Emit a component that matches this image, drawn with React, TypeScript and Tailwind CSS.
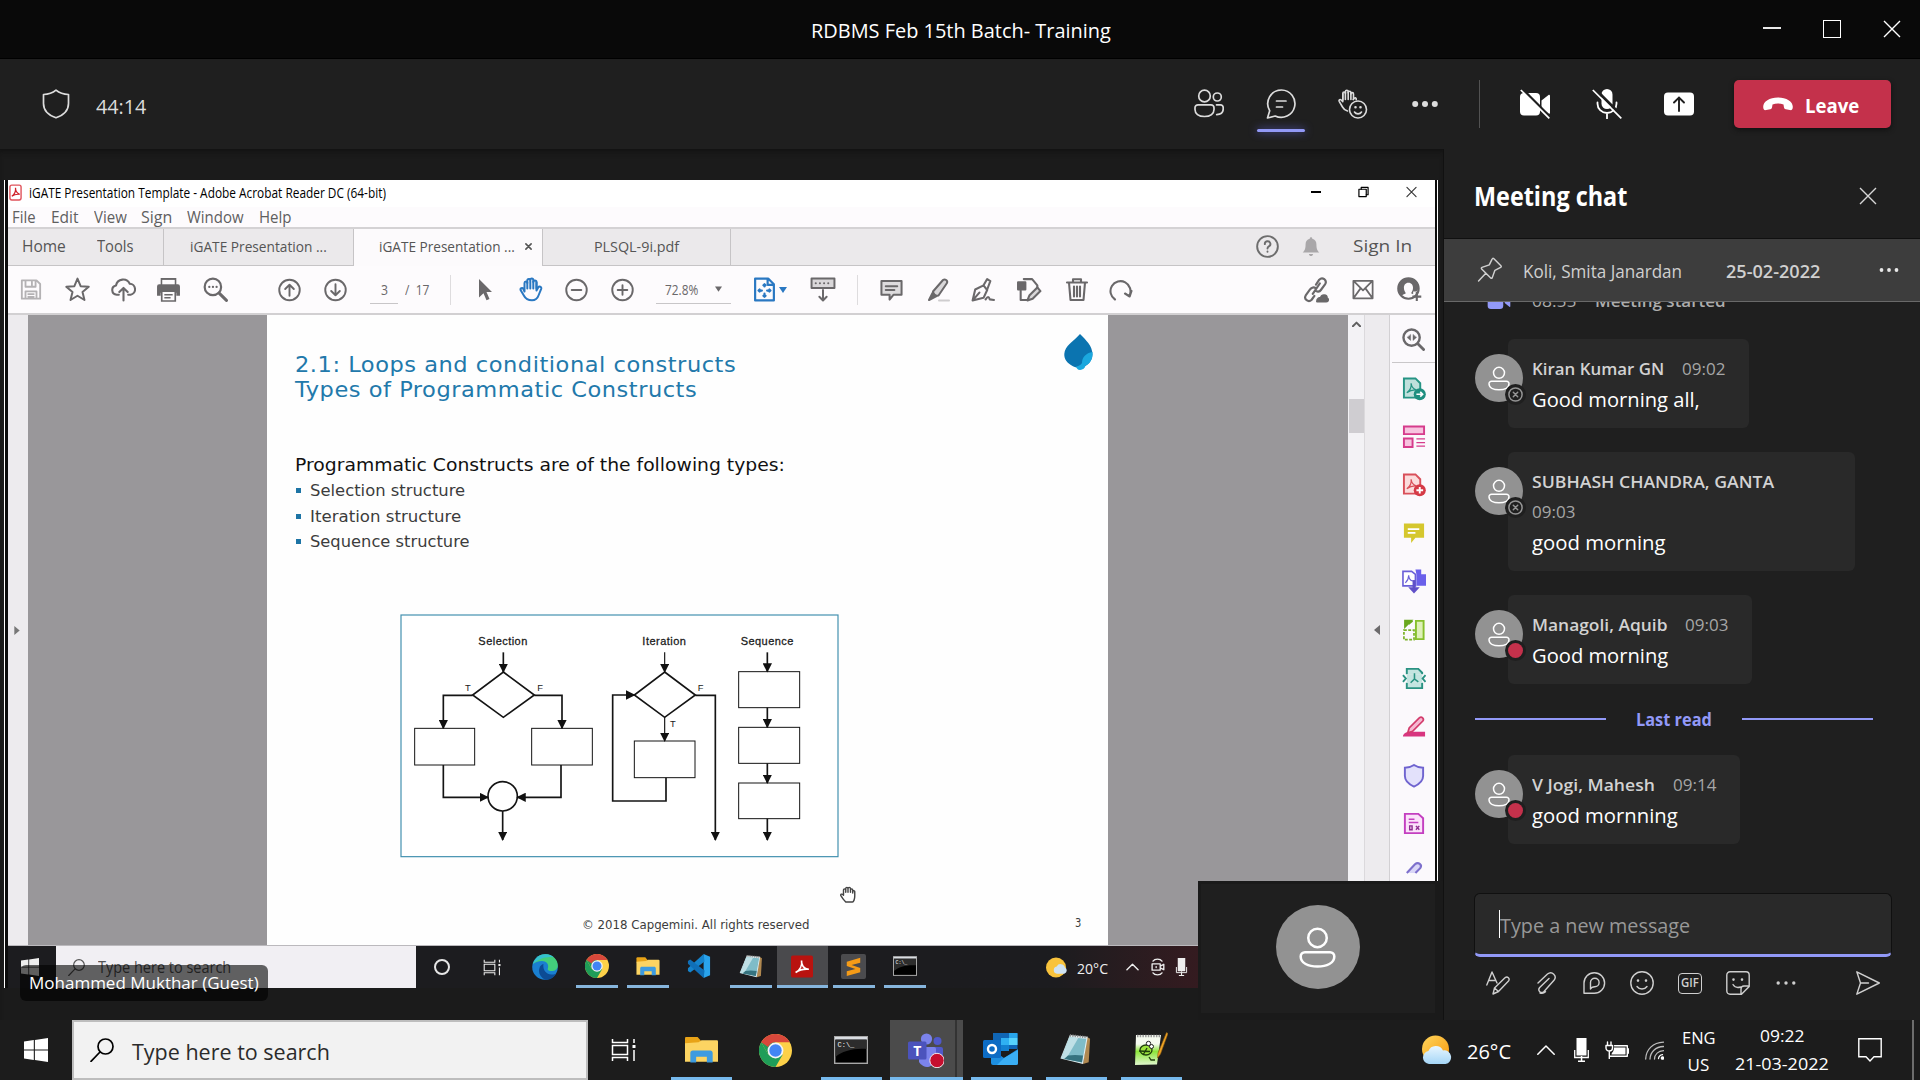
import React, { useLayoutEffect, useRef, useState } from "react";

/* Text that fills the width of its box, so that it keeps its place in tight bars. */
function Fit({ className, children }: { className: string; children: React.ReactNode }) {
  const box = useRef<HTMLSpanElement>(null);
  const inner = useRef<HTMLSpanElement>(null);
  const [scale, setScale] = useState(1);
  useLayoutEffect(() => {
    if (box.current && inner.current && inner.current.offsetWidth > 0) {
      setScale(box.current.clientWidth / inner.current.offsetWidth);
    }
  }, []);
  return (
    <span ref={box} className={`block shrink-0 ${className}`}>
      <span
        ref={inner}
        className="inline-block origin-left whitespace-nowrap"
        style={{ transform: `scaleX(${scale})` }}
      >
        {children}
      </span>
    </span>
  );
}

type SvgProps = { box?: string; className?: string; children: React.ReactNode; w?: number };
function Line({ box = "0 0 24 24", className = "", children, w = 1.5 }: SvgProps) {
  return (
    <svg
      viewBox={box}
      className={`shrink-0 ${className}`}
      fill="none"
      stroke="currentColor"
      strokeWidth={w}
      strokeLinecap="round"
      strokeLinejoin="round"
    >
      {children}
    </svg>
  );
}
function Solid({ box = "0 0 24 24", className = "", children }: SvgProps) {
  return (
    <svg viewBox={box} className={`shrink-0 ${className}`} fill="currentColor">
      {children}
    </svg>
  );
}

function CloseX({ className = "" }: { className?: string }) {
  return (
    <Line box="0 0 18 18" w={1.4} className={`h-[18px] w-[18px] ${className}`}>
      <path d="M1 1l16 16M17 1L1 17" strokeLinecap="butt" />
    </Line>
  );
}

function TitleBar() {
  return (
    <header className="grid h-[59px] grid-cols-[1fr_auto_1fr] items-center border-b border-black bg-[#090909] text-white">
      <span />
      <Fit className="ml-[2px] mt-[3px] w-[300px] text-[20px] leading-[30px]">RDBMS Feb 15th Batch- Training</Fit>
      <div className="flex items-center justify-end gap-[42px] pr-[19px]">
        <span className="mb-[2px] h-[2px] w-[18px] bg-[#e8e8e8]" />
        <span className="h-[18px] w-[18px] border-[1.5px] border-white" />
        <CloseX />
      </div>
    </header>
  );
}

function MeetingBar() {
  return (
    <div className="flex h-[90px] items-center bg-[#1f1f1f] pl-[42px] pr-[29px] text-[#dcdcdc]">
      <Line box="0 0 28 30" w={1.7} className="h-[30px] w-[28px]">
        <path d="M14 1.2c3.4 2.8 7.600 4.200 12.500 4.300v9c0 6.500-4.500 11.500-12.500 14.300C6 26 1.500 21 1.500 14.500v-9c4.900-.1 9.100-1.500 12.500-4.300z" />
      </Line>
      <Fit className="ml-[26px] mt-[4px] w-[50px] text-[20.500px] leading-[30px]">44:14</Fit>
      <div className="ml-auto flex items-center gap-[42px]">
        <Line box="0 0 30 30" w={1.7} className="h-[30px] w-[30px]">
          <circle cx="10.500" cy="7" r="5.800" />
          <circle cx="23.300" cy="8" r="4" />
          <path d="M4 15.800h13a3 3 0 0 1 3 3v1.700c0 4-3.500 7-9.500 7S1 24.500 1 20.500v-1.700a3 3 0 0 1 3-3z" />
          <path d="M22.500 15.800h4a2.700 2.700 0 0 1 2.700 2.700v1.500c0 3.400-2.500 5.400-6.500 5.600" />
        </Line>
        <div className="relative">
          <Line box="0 0 30 30" w={1.7} className="h-[30px] w-[30px]">
            <path d="M15.500 1a13.700 13.700 0 1 1-6.300 26L1.500 29l2.200-7.300A13.700 13.700 0 0 1 15.500 1z" />
            <path d="M10.500 12h9.500M10.500 18h6" />
          </Line>
          <span className="absolute -left-[9px] top-[40px] h-[3px] w-[48px] rounded-full bg-[#9299f7] shadow-[0_0_8px_#5b5fc7]" />
        </div>
        <Line box="0 0 30 30" w={1.6} className="h-[30px] w-[30px]">
          <path d="M9.500 22C7 21.500 5.600 20 4.500 18L1.200 12.300c-.6-1.500 1-2.300 2-1.300l1.600 1.600V4.500c0-2 2.600-2 2.600 0v-1.800c0-2 2.800-2 2.800 0v1c0-2 2.700-2 2.700 0V5c0-1.800 2.600-1.800 2.600 0v5.500" />
          <path d="M4.800 4.500V11M7.400 3v7.500M10.200 3v7.500M12.900 4.500v6" />
          <path d="M15.200 10.500c1-2.200 3.400-2.200 3 .3" />
          <circle cx="20" cy="20.500" r="8.500" />
          <path d="M16.500 23c1.500 2.500 5.500 2.500 7 0" />
          <path d="M17.500 18.200v.1M22.500 18.200v.1" strokeWidth="2.600" />
        </Line>
        <Solid box="0 0 30 30" className="h-[30px] w-[30px]">
          <circle cx="5.200" cy="15" r="3" />
          <circle cx="15" cy="15" r="3" />
          <circle cx="24.800" cy="15" r="3" />
        </Solid>
      </div>
      <span className="ml-[39px] h-[48px] w-px bg-[#525252]" />
      <div className="ml-[40px] flex items-center gap-[42px] text-white">
        <Solid box="0 0 30 30" className="h-[30px] w-[30px]">
          <path d="M4 4h12a4 4 0 0 1 4 4v14.500a4 4 0 0 1-4 4H4a4 4 0 0 1-4-4V8a4 4 0 0 1 4-4z" />
          <path d="M21.500 11.500L28.500 6c.8-.5 1.500-.2 1.500.8v17c0 1-.7 1.300-1.500.7l-7-5.500z" />
          <path d="M1.500-.5L30.500 28.500" stroke="#1f1f1f" strokeWidth="3" />
          <path d="M.8 1L29.300 29.300" stroke="#fff" strokeWidth="1.700" />
        </Solid>
        <Solid box="0 0 30 30" className="h-[30px] w-[30px]">
          <rect x="9.500" y="0" width="11" height="20" rx="5.500" />
          <path d="M5.500 13.500v1.200c0 5 4 9.300 9.500 9.300s9.500-4.300 9.500-9.300v-1.200M15 24v5.500" fill="none" stroke="#fff" strokeWidth="1.800" strokeLinecap="round" />
          <path d="M2.500-.5L30.500 27.500" stroke="#1f1f1f" strokeWidth="3" />
          <path d="M.8 1L29.300 29.300" stroke="#fff" strokeWidth="1.700" />
        </Solid>
        <Solid box="0 0 30 30" className="h-[30px] w-[30px]">
          <rect x="0" y="3.500" width="30" height="23" rx="4" />
          <path d="M15 22V9M10 13.500l5-5 5 5" fill="none" stroke="#1f1f1f" strokeWidth="1.900" strokeLinecap="round" />
        </Solid>
      </div>
      <button className="ml-[40px] flex h-[48px] w-[157px] items-center rounded-[5px] bg-[#c4314b] pl-[29px] font-bold text-white shadow-[0_2px_5px_#111]">
        <Solid box="0 0 30 14" className="h-[14px] w-[30px]">
          <path d="M15 .5c8.500 0 14.800 4 14.800 9.300 0 2.700-1 3.700-3 3.300l-4-.8c-1.300-.3-1.700-.9-1.900-2.200l-.4-2.600c-1.600-.7-3.500-1-5.500-1s-3.900.3-5.500 1l-.4 2.600c-.2 1.300-.6 1.900-1.900 2.200l-4 .8c-2 .4-3-.6-3-3.300C.2 4.500 6.500.5 15 .5z" />
        </Solid>
        <Fit className="ml-[12px] mt-[3px] w-[54px] text-[20px] leading-[30px]">Leave</Fit>
      </button>
    </div>
  );
}

/* ---------- shared screen: Acrobat window ---------- */

function AcrobatTitle() {
  return (
    <div className="flex h-[27px] items-center bg-white text-black">
      <svg viewBox="0 0 14 18" className="-mt-[2px] ml-px h-[17px] w-[13px] shrink-0">
        <rect x="1" y="1" width="12" height="16" rx="2" fill="#fff" stroke="#e0525a" strokeWidth="1.500" />
        <path d="M3 13c3-2 4.500-5 4-9 0 4 1.500 6 4.500 7-3.500-.5-6 .3-8.500 2z" fill="none" stroke="#d02028" strokeWidth="1.300" />
      </svg>
      <Fit className="-mt-[2px] ml-[7px] w-[357px] text-[14px] leading-[20px]">
        iGATE Presentation Template - Adobe Acrobat Reader DC (64-bit)
      </Fit>
      <div className="-mt-[3px] ml-auto mr-[18px] flex items-center gap-[37px]">
        <span className="h-[1.500px] w-[10px] bg-black" />
        <Line box="0 0 12 12" w={1.300} className="h-[12px] w-[11px]">
          <rect x="1" y="3" width="8" height="8" />
          <path d="M3.500 3V1h7.500v8H9" />
        </Line>
        <Line box="0 0 12 12" w={1.200} className="h-[12px] w-[11px] text-[#333]">
          <path d="M1 1l10 10M11 1L1 11" />
        </Line>
      </div>
    </div>
  );
}

function AcrobatMenu() {
  return (
    <div className="flex h-[20px] items-center bg-[#fdfbfd] pl-[4px] text-[15.500px] leading-[20px] text-[#606060]">
      <Fit className="w-[24px]">File</Fit>
      <Fit className="ml-[15px] w-[28px]">Edit</Fit>
      <Fit className="ml-[15px] w-[33px]">View</Fit>
      <Fit className="ml-[14px] w-[31px]">Sign</Fit>
      <Fit className="ml-[15px] w-[57px]">Window</Fit>
      <Fit className="ml-[15px] w-[33px]">Help</Fit>
    </div>
  );
}

function AcrobatTabs() {
  return (
    <div className="flex h-[39px] items-stretch border-t-2 border-[#d4d2d4] bg-[#ebe9eb] text-[15.500px] leading-[20px] text-[#555]">
      <div className="flex w-[156px] items-center border-b border-r border-[#c6c4c6] pb-[2px] pl-[14px]">
        <Fit className="w-[44px]">Home</Fit>
        <Fit className="ml-[31px] w-[37px]">Tools</Fit>
      </div>
      <div className="flex w-[190px] items-center border-b border-r border-[#c6c4c6] pl-[26px] text-[14.500px]">
        <Fit className="w-[137px]">iGATE Presentation ...</Fit>
      </div>
      <div className="flex w-[188px] items-center bg-[#fcfafc] pb-px pl-[25px] text-[14.500px]">
        <Fit className="w-[136px]">iGATE Presentation ...</Fit>
        <Line box="0 0 8 8" w={1.800} className="-mt-[2px] ml-[10px] h-[7px] w-[7px]">
          <path d="M1 1l6 6M7 1L1 7" />
        </Line>
      </div>
      <div className="flex w-[189px] items-center border-x border-b border-[#c6c4c6] pl-[51px] text-[14.500px]">
        <Fit className="w-[85px]">PLSQL-9i.pdf</Fit>
      </div>
      <div className="flex grow items-center justify-end border-b border-[#c6c4c6] pb-[2px] pr-[23px]">
        <Line className="h-[23px] w-[23px] text-[#6d6d6d]" w={2}>
          <circle cx="12" cy="12" r="10.800" />
          <path d="M9.200 9.500a2.900 2.900 0 1 1 4.300 2.400c-1 .6-1.500 1-1.500 2.200M12 17.300v.2" />
        </Line>
        <Solid className="ml-[22px] h-[21px] w-[20px] text-[#a9a7a9]">
          <path d="M12 1c1 0 1.500.7 1.500 1.700 3.300.8 5 3.300 5 6.500 0 6 1.500 8 3.500 10H2c2-2 3.500-4 3.500-10 0-3.200 1.700-5.700 5-6.500C10.500 1.700 11 1 12 1zM9.500 21h5c-.3 1.700-1.300 2.500-2.500 2.500s-2.200-.8-2.500-2.500z" />
        </Solid>
        <Fit className="ml-[32px] w-[59px] font-medium">Sign In</Fit>
      </div>
    </div>
  );
}

function AcrobatToolbar() {
  return (
    <div className="flex h-[49px] items-center border-b-2 border-[#d2d0d2] bg-[#fdfbfd] pl-[12px] text-[#6a686a]">
      <Line className="h-[23px] w-[22px] text-[#b4b2b4]" w={2}>
        <path d="M2 2h16l4 4v16H2zM6 2v7h11V2M13 3.500v4M6 22v-8h12v8M9 17h6M9 20h6" />
      </Line>
      <Line className="ml-[22px] h-[25px] w-[27px]" w={1.900}>
        <path d="M12 1.500l3 7.300 7.800.6-6 5 1.900 7.700L12 18l-6.700 4.100 1.900-7.700-6-5 7.800-.6z" />
      </Line>
      <Line className="ml-[20px] h-[25px] w-[25px]" w={2}>
        <path d="M7.500 17H5.500a4.500 4.500 0 0 1-.7-8.900A7 7 0 0 1 18 6.500a5.300 5.300 0 0 1 .8 10.500H16.500M12 22.500V11M8 14.500l4-4 4 4" />
      </Line>
      <Solid className="ml-[20px] h-[25px] w-[25px]">
        <path d="M4.500 1h15v6h-15zM1 9a2 2 0 0 1 2-2h18a2 2 0 0 1 2 2v9h-3.500v-3h-15v3H1z" />
        <path d="M6 2.800h12V7H6z" fill="#fdfbfd" />
        <path d="M5.500 13.500h13V23h-13z" stroke="#6a686a" strokeWidth="1.600" fill="#fdfbfd" />
        <path d="M8 17h8M8 20h6" stroke="#6a686a" strokeWidth="1.400" />
      </Solid>
      <Line className="ml-[22px] mr-px h-[25px] w-[25px]" w={2.100}>
        <circle cx="9.500" cy="9.500" r="7.900" />
        <path d="M15.500 15.500l7 7" strokeWidth="2.900" />
        <path d="M6 9.500h.1M9.500 9.500h.1M13 9.500h.1" />
      </Line>
      <Line className="ml-[49px] h-[24px] w-[23px]" w={2}>
        <circle cx="12" cy="12" r="10.700" />
        <path d="M12 18V6.500M7.500 11L12 6.500l4.500 4.500" />
      </Line>
      <Line className="ml-[23px] h-[24px] w-[23px]" w={2}>
        <circle cx="12" cy="12" r="10.700" />
        <path d="M12 6v11.500M7.500 13l4.500 4.500 4.500-4.500" />
      </Line>
      <div className="ml-[23px] flex h-[28px] w-[28px] items-center justify-center border-b border-[#c8c6c8] text-[14px]">
        <Fit className="w-[7px]">3</Fit>
      </div>
      <Fit className="ml-[7px] w-[24px] text-[14px]">/&nbsp; 17</Fit>
      <span className="ml-[21px] h-[30px] w-px bg-[#dedcde]" />
      <Solid box="0 0 14 22" className="ml-[27px] h-[22px] w-[14px]">
        <path d="M1 0l13 13H8.500l3 7-3 1.200-3-7L1 18.500z" />
      </Solid>
      <Line className="ml-[27px] h-[25px] w-[24px] text-[#2a78c2]" w={2}>
        <path d="M5.500 14V5.500c0-2 2.800-2 2.800 0V3.200c0-2.300 3-2.300 3 0V2.500c0-2 3-2 3 0v2c0-2 3.200-2 3.200 0V13l1.700-3c1-1.700 3.600-.8 3 1.300L19.500 18c-1 3-3 4.800-6.500 4.800-4 0-6.500-1.500-8-4.500l-3.300-5.500c-.8-2 1.500-3 2.600-1.500z" />
        <path d="M8.300 5v6M11.300 4v7M14.300 4v7M17.500 5v6" />
      </Line>
      <Line className="ml-[22px] h-[24px] w-[23px]" w={2}>
        <circle cx="12" cy="12" r="10.700" />
        <path d="M7 12h10" />
      </Line>
      <Line className="ml-[23px] h-[24px] w-[23px]" w={2}>
        <circle cx="12" cy="12" r="10.700" />
        <path d="M7 12h10M12 7v10" />
      </Line>
      <div className="ml-[22px] flex h-[28px] w-[75px] items-center border-b border-[#c8c6c8] pl-[9px]">
        <Fit className="w-[33px] text-[14px]">72.8%</Fit>
        <Solid box="0 0 8 6" className="ml-[17px] h-[6px] w-[7px]">
          <path d="M0 0h8L4 6z" />
        </Solid>
      </div>
      <Line className="ml-[23px] h-[25px] w-[21px] text-[#2a78c2]" w={2.100} box="2 0 20 24">
        <path d="M3 1.500h12.500L21 7v15.500H3zM15 2v5.500h5.500" />
        <path d="M12 7v2M12 16v3M6.500 13h3M14.500 13h3M11 8l1-1 1 1M11 18l1 1 1-1M7.300 12l-1 1 1 1M16.700 12l1 1-1 1" />
      </Line>
      <Solid box="0 0 8 6" className="ml-[4px] h-[6px] w-[8px] text-[#2a78c2]">
        <path d="M0 0h8L4 6z" />
      </Solid>
      <Line className="ml-[23px] h-[25px] w-[26px]" w={1.900}>
        <rect x="1" y="1.500" width="22" height="9" fill="#d9d7d9" />
        <path d="M5 6h.1M9 6h.1M13 6h.1M17 6h.1M12 12.500V22M8.500 19l3.500 3.500 3.500-3.500" />
      </Line>
      <span className="ml-[21px] h-[30px] w-px bg-[#dedcde]" />
      <Line className="ml-[22px] h-[24px] w-[23px]" w={2.100}>
        <path d="M1.500 2.500h21V17H14l-4 5v-5H1.500z" fill="#dddbdd" />
        <path d="M6 8h12M6 12h9" />
      </Line>
      <Line className="ml-[23px] h-[25px] w-[24px]" w={2}>
        <path d="M7 14L17 2.500c2-1.500 5 .5 4 3L12.500 18l-4 .5z" fill="#d9d7d9" />
        <path d="M6.500 15.500l4 3L3 22.500z" fill="#6a686a" />
        <path d="M13 23h10" stroke="#cfcdcf" />
      </Line>
      <Line className="ml-[20px] h-[25px] w-[25px]" w={2}>
        <path d="M2.500 22.500L5 12l8-4 3.500 4.500L13 20zM3 22l6-7M13 8l3.500-6 3 2-3 8M15 21.500c2-3 3-3 4 0l4 .5" />
      </Line>
      <Line className="ml-[21px] h-[25px] w-[26px]" w={2}>
        <path d="M7 2h8l5 6v3M4 13v9h6" />
        <path d="M1.500 5h7v7h-7z" fill="#6a686a" />
        <path d="M10.500 22.500l2-5L20 10l3 3.500-7.500 7.300z" fill="#d9d7d9" />
      </Line>
      <Line className="ml-[23px] h-[25px] w-[24px]" w={2.100}>
        <path d="M2 5h20M8 4.500V1.800h8v2.700M4 5l1.500 17.500h13L20 5M9 9v10M12 9v10M15 9v10" />
      </Line>
      <Line className="ml-[20px] h-[24px] w-[24px]" w={2.100}>
        <path d="M6 21.500A10 10 0 1 1 20.500 17.500M22.500 13l-1.800 5.500L16 15.500" />
      </Line>
      <Line className="ml-[170px] h-[26px] w-[26px]" w={2}>
        <path d="M9 15.500l6.500-9.500M12 7l3-4.500c3-3 7.500.5 5.500 4L16.500 12c-1.200 1.700-3.500 2-5 .5M12 10.500c-2-1.500-4-1-5.500 1L2.500 17c-2 3.500 2.500 7 5.500 4l2.500-3.500" />
        <path d="M13 22.500c0-2.500 2-3.500 3.500-3.300C17.500 16 22 16.500 22 19.500c1.500.7 1.500 3-.5 3z" fill="#6a686a" />
      </Line>
      <Line className="ml-[22px] h-[21px] w-[24px]" w={2}>
        <path d="M1 2h22v20H1zM1.500 2.500L12 13 22.500 2.500M1.500 21.500L9 11M22.500 21.500L15 11" />
      </Line>
      <Solid className="ml-[22px] h-[25px] w-[25px]">
        <circle cx="11" cy="11" r="9.800" fill="none" stroke="#6a686a" strokeWidth="2" />
        <path d="M11 1.500c-9 0-13 10-7 17 1-1.500 3-2 4.500-3-3-3.500-2.500-10 2.500-10s5.500 6.500 2.500 10c.7.500 1.500.7 2 1V14H19c4-6 .5-12.500-8-12.500z" />
        <path d="M19 14.500v8.500M14.800 18.800h8.500" stroke="#6a686a" strokeWidth="2" />
      </Solid>
    </div>
  );
}

function Flowchart() {
  const label = "font-['Liberation_Sans'] text-[33px] tracking-[2px]";
  return (
    <svg viewBox="63 43 1317 732" className="ml-[105px] mt-[59px] h-[244px] w-[439px]">
      <defs>
        <marker id="tip" viewBox="0 0 10 10" refX="9" refY="5" markerWidth="28" markerHeight="28" markerUnits="userSpaceOnUse" orient="auto">
          <path d="M0 0L10 5L0 10z" fill="#111" />
        </marker>
      </defs>
      <rect x="66" y="46" width="1311" height="725" fill="#fff" stroke="#3f8eae" strokeWidth="3.500" />
      <g fill="#1a1a1a" stroke="#1a1a1a" strokeWidth=".8">
        <text x="298" y="136" className={label} textLength="149">Selection</text>
        <text x="790" y="136" className={label} textLength="133">Iteration</text>
        <text x="1085" y="136" className={label} textLength="160">Sequence</text>
        <g className="font-['Liberation_Sans'] text-[28px]" strokeWidth="0">
          <text x="258" y="273">T</text>
          <text x="475" y="274">F</text>
          <text x="873" y="381">T</text>
          <text x="956" y="274">F</text>
        </g>
      </g>
      <g fill="none" stroke="#141414" strokeWidth="3">
        <rect x="107" y="386" width="180" height="110" />
        <rect x="458" y="386" width="182" height="110" />
        <rect x="766" y="424" width="182" height="110" />
        <rect x="1079" y="216" width="183" height="108" />
        <rect x="1079" y="383" width="183" height="108" />
        <rect x="1079" y="550" width="183" height="107" />
      </g>
      <g fill="none" stroke="#141414" strokeWidth="5">
        <path d="M373 217L466 286L373 353L281 286z" />
        <path d="M857 217L949 286L857 353L766 286z" />
        <circle cx="371" cy="590" r="44" />
        <path d="M373 158V217" markerEnd="url(#tip)" />
        <path d="M281 287H193V386" markerEnd="url(#tip)" />
        <path d="M466 287H549V386" markerEnd="url(#tip)" />
        <path d="M193 496V593H327" markerEnd="url(#tip)" />
        <path d="M546 496V593H415" markerEnd="url(#tip)" />
        <path d="M371 634V721" markerEnd="url(#tip)" />
        <path d="M857 158V217" markerEnd="url(#tip)" strokeWidth="3.500" />
        <path d="M857 353V424" markerEnd="url(#tip)" strokeWidth="3.500" />
        <path d="M861 534V604H701V286H766" markerEnd="url(#tip)" />
        <path d="M949 287H1009V721" markerEnd="url(#tip)" />
        <path d="M1165 158V216" markerEnd="url(#tip)" />
        <path d="M1165 324V383" markerEnd="url(#tip)" />
        <path d="M1165 491V550" markerEnd="url(#tip)" />
        <path d="M1165 657V721" markerEnd="url(#tip)" />
      </g>
    </svg>
  );
}

function Bullet({ width, text }: { width: string; text: string }) {
  return (
    <li className="flex h-[25.500px] items-center text-[16.500px] leading-[25px] text-[#3c3c3c]">
      <span className="ml-px h-[5px] w-[5px] bg-[#1d74a5]" />
      <Fit className={`ml-[9px] ${width}`}>{text}</Fit>
    </li>
  );
}

function Slide() {
  return (
    <div className="relative w-[841px] overflow-hidden bg-[#fefefe] pl-[28px] font-['DejaVu_Sans',sans-serif]">
      <div className="flex justify-between">
        <div className="mt-[37px] text-[21.500px] leading-[25px] text-[#2279ab]">
          <Fit className="w-[441px] tracking-[0.500px]">2.1: Loops and conditional constructs</Fit>
          <Fit className="w-[402px] tracking-[0.500px]">Types of Programmatic Constructs</Fit>
        </div>
        <svg viewBox="0 0 29 36" className="mr-[15px] mt-[19px] h-[36px] w-[29px]">
          <path d="M16 0c6 6 12.500 12 12.500 20.500 0 4-2 7.500-5.500 10.500-4 3-10 3.500-14.500 1C3 29 0 25 .3 20 .8 11.500 10 7 16 0z" fill="#0b74b0" />
          <path d="M28.500 18C22 19 18 23.500 18 29c-1 2-3 3-6 3.700 1 2 1.500 3 4 3.300 4-.5 5-2.500 5.500-4.500 4.500-1.500 7.500-6.500 7-13.500z" fill="#1ba8de" />
        </svg>
      </div>
      <Fit className="mt-[50px] w-[490px] text-[17.500px] leading-[26px] text-[#111]">
        Programmatic Constructs are of the following types:
      </Fit>
      <ul>
        <Bullet width="w-[155px]" text="Selection structure" />
        <Bullet width="w-[151px]" text="Iteration structure" />
        <Bullet width="w-[160px]" text="Sequence structure" />
      </ul>
      <Flowchart />
      <div className="mt-[57px] flex text-[12.500px] leading-[20px] text-[#3c3c3c]">
        <Fit className="ml-[287px] w-[227px]">© 2018 Capgemini. All rights reserved</Fit>
        <Fit className="-mt-[2px] ml-[266px] w-[6px] text-[11.500px]">3</Fit>
      </div>
      <Line className="absolute left-[572px] top-[569px] h-[21px] w-[18px] text-[#444]" w={1.900}>
        <path d="M6 13V6c0-2 3-2 3 0V4c0-2 3-2 3 0v0c0-2 3.300-2 3.300 0v2c0-2 3-2 3 0v2c0-1.500 2.700-1.500 2.700 0v6c0 4-1.500 8-3 8H9c-2-2-4.500-5-6.500-8.500-1-2 1.500-3 3.500-.5zM9 5v4M12 4v5M15.300 4v5M18.300 6v4" fill="#fff" />
      </Line>
    </div>
  );
}

function PdfPage({ color, fill }: { color: string; fill: string }) {
  return (
    <>
      <path d="M2 2h12l5 5v15H2z" fill={fill} stroke={color} strokeWidth="2" />
      <path d="M5 17c3-2 5-6 4.500-10 .5 4 2 6 5.500 7-4-.3-7 .7-10 3z" fill="none" stroke={color} strokeWidth="1.300" />
    </>
  );
}

function ToolsPanel() {
  const cell = "flex h-[48.400px] shrink-0 items-center justify-center";
  const ico = "h-[25px] w-[24px]";
  return (
    <div className="w-[45px] overflow-hidden bg-[#fbf9fc] pl-[2px]">
      <div className="mb-px flex h-[48px] items-center justify-center border-b border-[#c9c7c9] pt-px text-[#6a686a]">
        <Line className="h-[23px] w-[23px]" w={2.500}>
          <circle cx="10" cy="10" r="8.500" />
          <path d="M16.500 16.500l6 6" strokeWidth="3" />
          <path d="M9 7v6l-3.500-3zM11.500 7v6l3.500-3z" fill="currentColor" strokeWidth=".5" />
        </Line>
      </div>
      <div className={cell}>
        <svg viewBox="0 0 25 25" className={ico}>
          <PdfPage color="#269484" fill="#bfe0dc" />
          <circle cx="18.500" cy="18.500" r="6.300" fill="#1f8f80" />
          <path d="M15 18.500h6M19 16l2.500 2.500L19 21" stroke="#fff" strokeWidth="1.700" fill="none" />
        </svg>
      </div>
      <div className={cell}>
        <svg viewBox="0 0 25 25" className={ico} fill="#f7c3df" stroke="#d63c8c" strokeWidth="2">
          <path d="M2 2h21v8H2zM2 14.500h9v9H2z" />
          <path d="M15 15h9M15 18.800h9M15 22.500h9" strokeWidth="1.300" />
        </svg>
      </div>
      <div className={cell}>
        <svg viewBox="0 0 25 25" className={ico}>
          <PdfPage color="#d9505a" fill="#fbdcdc" />
          <circle cx="18.500" cy="18.500" r="6.300" fill="#d53a46" />
          <path d="M15 18.500h7M18.500 15v7" stroke="#fff" strokeWidth="2" />
        </svg>
      </div>
      <div className={cell}>
        <svg viewBox="0 0 25 25" className={ico}>
          <path d="M2 2h21v15H14l-4.500 5.500V17H2z" fill="#d5c72e" />
          <path d="M6 8h12M6 11.800h8" stroke="#fff" strokeWidth="1.700" />
        </svg>
      </div>
      <div className={cell}>
        <svg viewBox="0 0 25 25" className={ico}>
          <path d="M1 2h9l4 3v12H1z" fill="#fff" stroke="#6a60d8" strokeWidth="1.700" />
          <path d="M3.500 14c3-3 3.500-5 3.500-8 0 4 1.500 5.500 4.500 6" fill="none" stroke="#6a60d8" strokeWidth="1.200" />
          <path d="M14 0h6v5h5v12H15V5z" fill="#6a60ea" />
          <path d="M12.500 11v9" stroke="#6050c8" strokeWidth="3" />
          <path d="M6.500 18.500h12l-6 6.500z" fill="#6050c8" />
        </svg>
      </div>
      <div className={cell}>
        <svg viewBox="0 0 25 25" className={ico}>
          <path d="M14.500 2.500h8v19h-8z" fill="#def0b8" stroke="#86c02c" strokeWidth="2" />
          <path d="M2 12h10.500v10H2z" fill="none" stroke="#7cb228" strokeWidth="1.800" strokeDasharray="3 1.500" />
          <path d="M3 9V2h7zM7 6l4-3.500" fill="#6aa81e" stroke="#6aa81e" strokeWidth="1.600" />
        </svg>
      </div>
      <div className={cell}>
        <svg viewBox="0 0 25 25" className={ico} fill="none" stroke="#2a9282" strokeWidth="2">
          <path d="M5 8V2.500h12l4 4V8M5 17v5.500h16V17" fill="#c4e4e0" />
          <path d="M5 8h16v9H5z" fill="#c4e4e0" stroke="none" />
          <path d="M1 9l3 3.500L1 16M24.500 9l-3 3.500 3 3.500" />
          <path d="M9 17l4-4 4 3M13 13V7" strokeWidth="1.600" />
        </svg>
      </div>
      <div className={cell}>
        <svg viewBox="0 0 25 25" className={ico}>
          <path d="M1 23c0-3 3-4.500 6-5h17v5z" fill="#d8357f" />
          <path d="M6 19l1.500-5L18 3.500c2.500-2 5.500.8 3.700 3.300L11 17.500z" fill="#f6b9d2" stroke="#d33c6c" strokeWidth="1.800" />
        </svg>
      </div>
      <div className={cell}>
        <svg viewBox="0 0 25 25" className={ico}>
          <path d="M12.500 1.500c3 2 6 3 9.500 3V13c0 5-4 8.500-9.500 11C7 21.500 3 18 3 13V4.500c3.500 0 6.500-1 9.500-3z" fill="#e3e1fb" stroke="#6f64cf" strokeWidth="2" />
        </svg>
      </div>
      <div className={cell}>
        <svg viewBox="0 0 25 25" className={ico} fill="none" stroke="#c33fc0" strokeWidth="2">
          <path d="M3 2.500h14l5 4.500v15.500H3z" fill="#fbe2fa" />
          <path d="M7 8h6M7 11.500h10" strokeWidth="1.500" />
          <path d="M8 15h2.500v4H8zM14.500 15l3.500 4M18 15l-3.500 4" strokeWidth="1.500" stroke="#8f2d90" />
        </svg>
      </div>
      <div className="flex h-[48px] items-start justify-center pt-[11px]">
        <svg viewBox="0 0 25 25" className={ico}>
          <path d="M5 14l8.500-9c3.500-3 8 .5 5.500 4l-5 5" fill="#d9d6f7" stroke="#7d70cc" strokeWidth="2.200" />
        </svg>
      </div>
    </div>
  );
}

function Document() {
  return (
    <div className="flex h-[631px] border-b border-[#bbb9bd] bg-[#99979a]">
      <div className="flex w-[20px] items-center bg-[#edebee]">
        <Solid box="0 0 6 10" className="ml-[6px] h-[9px] w-[6px] text-[#777]">
          <path d="M0 0l6 5-6 5z" />
        </Solid>
      </div>
      <span className="w-[239px] shrink-0" />
      <Slide />
      <span className="w-[240px] shrink-0" />
      <div className="w-[17px] border-r border-[#dbd9dc] bg-[#f3f2f5] pl-px">
        <Line box="0 0 10 6" w={2.200} className="ml-[3px] mt-[6px] h-[6px] w-[9px] text-[#606060]">
          <path d="M1 5.500l4-4 4 4" />
        </Line>
        <div className="mt-[72px] h-[34px] w-[15px] bg-[#cfcdd1]" />
      </div>
      <div className="flex w-[25px] items-center justify-center border-r border-[#d2d0d3] bg-[#edebee]">
        <Solid box="0 0 6 10" className="h-[10px] w-[6px] text-[#6c6a6c]">
          <path d="M6 0L0 5l6 5z" />
        </Solid>
      </div>
      <ToolsPanel />
    </div>
  );
}

/* ---------- application icons shared by both taskbars ---------- */

function WinLogo({ className = "" }: { className?: string }) {
  return (
    <Solid className={className}>
      <path d="M0 3.400L9.800 2v9.500H0zM10.900 1.900L24 0v11.500H10.900zM0 12.500h9.800V22L0 20.600zM10.900 12.500H24V24l-13.100-1.900z" />
    </Solid>
  );
}
function TaskView({ className = "" }: { className?: string }) {
  return (
    <Line box="0 0 24 24" w={1.500} className={className}>
      <path d="M1 1v3.500h15V1M1 23v-3.500h15V23M1 7.500h15v9H1zM22.500 1v4M22.500 12v11" strokeLinecap="butt" strokeLinejoin="miter" />
      <path d="M21 7h3v3h-3z" fill="currentColor" stroke="none" />
    </Line>
  );
}
function Glass({ className = "" }: { className?: string }) {
  return (
    <Line className={className} w={1.700}>
      <circle cx="15.500" cy="8.500" r="7.500" />
      <path d="M10 14L1 23.300" />
    </Line>
  );
}
function Chrome({ className = "" }: { className?: string }) {
  return (
    <svg viewBox="0 0 48 48" className={`shrink-0 ${className}`}>
      <circle cx="24" cy="24" r="24" fill="#fdd149" />
      <path d="M3.200 12A24 24 0 0 0 24 48l10.400-18L24 24 13.600 30z" fill="#1f9d58" />
      <path d="M3.200 12L13.600 30 24 24V12z" fill="#1f9d58" />
      <path d="M3.200 12A24 24 0 0 1 44.800 12H24A12 12 0 0 0 13.200 19z" fill="#d8483b" />
      <circle cx="24" cy="24" r="11.500" fill="#f4f4f4" />
      <circle cx="24" cy="24" r="9" fill="#4285f4" />
    </svg>
  );
}
function Explorer({ className = "" }: { className?: string }) {
  return (
    <svg viewBox="0 0 34 28" className={`shrink-0 ${className}`}>
      <path d="M0 2c0-1 .5-1.500 1.500-1.500H13L16 4v4H0z" fill="#e8a317" />
      <path d="M0 7l14-1 3-2h15.500c1 0 1.500.5 1.500 1.500V26H0z" fill="#fcd462" />
      <path d="M5.500 27V17c0-1.500 1-2.500 2.500-2.500h18c1.500 0 2.500 1 2.500 2.500v10h-6v-6h-11v6z" fill="#3d9be0" />
    </svg>
  );
}
function Cmd({ className = "" }: { className?: string }) {
  return (
    <svg viewBox="0 0 34 28" className={`shrink-0 ${className}`}>
      <rect x=".7" y=".7" width="32.600" height="26.600" fill="#000" stroke="#a8a8a8" strokeWidth="1.400" />
      <path d="M1 1h32v2.500H1z" fill="#d9dde2" />
      <path d="M1.500 4h31V13C20 12 8 15 1.500 21z" fill="#2c2c2c" />
      <text x="3.500" y="11" fontSize="7" fill="#f4f4f4" className="font-['Liberation_Mono']">C:\_</text>
    </svg>
  );
}
function Notepad({ className = "" }: { className?: string }) {
  return (
    <svg viewBox="0 0 34 34" className={`shrink-0 ${className}`}>
      <path d="M29 4l3.500 2L31 31l-6 2z" fill="#b08850" />
      <path d="M11 2l19 2-5 29-24-6z" fill="#e4f0f2" />
      <path d="M10.500 4.500L28.500 6 24 31.500 2 26.500z" fill="#7fbcc8" />
      <path d="M10.500 4.500L20 5.300 7 27.600l-5-1.100z" fill="#bfe0e6" />
      <path d="M9 24c5-1 10-1 16 0l-1.200 7L5 27.500z" fill="#36737f" />
      <path d="M11 2.500l18.500 2" stroke="#888" strokeWidth="2.500" strokeDasharray="1.300 1.300" />
    </svg>
  );
}
function Weather({ className = "" }: { className?: string }) {
  return (
    <svg viewBox="0 0 30 30" className={`shrink-0 ${className}`}>
      <defs>
        <linearGradient id="sun" x1="0" y1="0" x2="1" y2="1">
          <stop offset="0" stopColor="#ffd65c" />
          <stop offset="1" stopColor="#f6970d" />
        </linearGradient>
        <linearGradient id="cloud" x1="0" y1="0" x2="0" y2="1">
          <stop offset="0" stopColor="#e8f6ff" />
          <stop offset="1" stopColor="#a5d6f7" />
        </linearGradient>
      </defs>
      <circle cx="13.500" cy="14" r="13.500" fill="url(#sun)" />
      <path d="M7 29a6.500 6.500 0 0 1-.6-12.900A8 8 0 0 1 21 15.500 6.800 6.800 0 1 1 23.500 29z" fill="url(#cloud)" />
    </svg>
  );
}
function SunCloud({ className = "" }: { className?: string }) {
  return (
    <svg viewBox="0 0 22 24" className={`shrink-0 ${className}`}>
      <circle cx="10.500" cy="12" r="10.500" fill="#f8c33c" />
      <path d="M11.500 18.500a3.800 3.800 0 0 1-.3-7.500 4.600 4.600 0 0 1 8.600 1 3.500 3.500 0 0 1-.6 6.500z" fill="#cfe3f4" />
    </svg>
  );
}
function Mic({ className = "" }: { className?: string }) {
  return (
    <Solid box="0 0 15 24" className={className}>
      <path d="M2.500 0h10v17.500h-10zM6.800 18h1.500v5H6.800zM4 22.500h7V24H4z" />
      <path d="M.7 12v7.500h13.600V12" fill="none" stroke="currentColor" strokeWidth="1.300" />
    </Solid>
  );
}

function InnerTaskbar() {
  const cell = "flex h-full w-[51.400px] shrink-0 flex-col items-center justify-between pt-[8px]";
  const bar = "h-[3px] w-[42px] bg-[#86b5dd]";
  return (
    <div className="flex h-[42px] items-center bg-[#1c1c1f] text-[#eee]">
      <div className="flex w-[48px] justify-center pr-[4px]">
        <WinLogo className="h-[18px] w-[18px]" />
      </div>
      <div className="flex h-full w-[360px] items-center bg-[#f1eff3] pl-[12px] text-[#555]">
        <Glass className="h-[17px] w-[17px]" />
        <Fit className="ml-[13px] w-[133px] text-[16px] leading-[20px]">Type here to search</Fit>
      </div>
      <div className="flex w-[51px] justify-center">
        <span className="h-[16px] w-[16px] rounded-full border-[2.500px] border-[#e6e6e6]" />
      </div>
      <div className="flex w-[50px] justify-center">
        <TaskView className="h-[17px] w-[18px]" />
      </div>
      <div className="flex w-[54px] justify-center pl-px">
        <svg viewBox="0 0 26 26" className="h-[26px] w-[26px]">
          <circle cx="13" cy="13" r="12.800" fill="#1a7fd0" />
          <path d="M1 10C3 3 9 0 14 .3 21 .5 26 6 25.800 12c-.3 4-4 5.500-7.500 5-2-.3-3-1.200-2.500-2.500C17.500 10 14 7 10 7 6 7 2.500 8.500 1 10z" fill="#43cf7c" />
          <path d="M1 10C3 3 9 0 14 .3c3 0 5.500 1 7.500 3C14 2 6 5 1 10z" fill="#35c1cf" />
          <path d="M13 25.800C8 23 6 19 7.500 14c.5-2 2-3.500 4-4-1 5 2 10 8 10.500 2 .2 3.500-.3 4.500-.8-2 4-6.500 6.500-11 6.100z" fill="#0c4b94" />
        </svg>
      </div>
      <div className={cell}>
        <Chrome className="h-[24px] w-[24px]" />
        <span className={bar} />
      </div>
      <div className={cell}>
        <Explorer className="mt-[3px] h-[19px] w-[24px]" />
        <span className={bar} />
      </div>
      <div className={cell}>
        <svg viewBox="0 0 26 26" className="h-[24px] w-[26px]">
          <path d="M18 0l7 3v20l-7 3z" fill="#29a3ec" />
          <path d="M18 0L1 15.500v3L3.500 20 19 8z" fill="#1583cc" />
          <path d="M18 26L1 10.500v-3L3.500 6 19 18z" fill="#0f6fb8" />
        </svg>
      </div>
      <div className={cell}>
        <Notepad className="h-[24px] w-[24px]" />
        <span className={bar} />
      </div>
      <div className={`${cell} bg-[#4a4a4d]`}>
        <svg viewBox="0 0 24 24" className="mt-px h-[23px] w-[22px]">
          <rect width="24" height="24" rx="2" fill="#b8130f" />
          <path d="M5 18.500c4.500-2.500 7.500-7.500 6.500-13-.5 5 2.500 9.500 8 9.500-5.500-.5-10 .5-14.500 3.500z" fill="none" stroke="#fff" strokeWidth="1.800" />
        </svg>
        <span className="h-[3px] w-full bg-[#86b5dd]" />
      </div>
      <div className={cell}>
        <svg viewBox="0 0 26 26" className="h-[25px] w-[25px]">
          <rect width="26" height="26" rx="2" fill="#4b4b4e" />
          <path d="M20 4v5l-9 2.500 9 3V19L6 23v-5l9-2.500-9-3V8z" fill="#f59b17" />
        </svg>
        <span className={bar} />
      </div>
      <div className={cell}>
        <Cmd className="mt-[2px] h-[20px] w-[24px]" />
        <span className={bar} />
      </div>
      <div className="flex h-full grow items-center bg-linear-to-r from-[#1c1c1f] from-25% to-[#3a1a20] to-60% pl-[115px]">
        <SunCloud className="h-[23px] w-[21px]" />
        <Fit className="ml-[10px] mt-[2px] w-[31px] text-[15px]">20°C</Fit>
        <Line box="0 0 14 8" className="ml-[18px] h-[8px] w-[13px]">
          <path d="M1 7l6-6 6 6" />
        </Line>
        <Line box="0 0 16 20" w={1.500} className="ml-[11px] h-[18px] w-[15px]">
          <path d="M3 3.500C5 .5 11 .5 13 3.500M3 16.500c2 3 8 3 10 0M2 6.500h9v7H2zM11 9l4-2v6l-4-2M6.500 9.500v1" />
        </Line>
        <Mic className="ml-[10px] h-[18px] w-[13px]" />
      </div>
    </div>
  );
}

function PersonGlyph({ className = "" }: { className?: string }) {
  return (
    <Line box="0 0 22 24" w={1.500} className={className}>
      <circle cx="11" cy="6.300" r="5.500" />
      <path d="M3.500 14.800h15a2.500 2.500 0 0 1 2.500 2.500c0 4-4.500 6-10 6s-10-2-10-6a2.500 2.500 0 0 1 2.500-2.500z" />
    </Line>
  );
}

function Stage() {
  return (
    <main className="relative w-[1443px] bg-[#1b1b1b] pt-[31px] shadow-[inset_0_6px_6px_-4px_#111]">
      <div className="ml-[4px] flex h-[808px] w-[1434px] border-l border-r border-white bg-[#0c0c0c] pl-[3px]">
        <div className="w-[1427px] overflow-hidden">
          <AcrobatTitle />
          <AcrobatMenu />
          <AcrobatTabs />
          <AcrobatToolbar />
          <Document />
          <InnerTaskbar />
        </div>
      </div>
      <div className="absolute left-[1198px] top-[732px] flex h-[139px] w-[245px] bg-[#1a1a1a] pl-[3px] pt-[3px]">
        <div className="flex h-[129px] w-[234px] items-center justify-center bg-[#1f1f1f] pb-[3px] pr-px">
          <span className="flex h-[84px] w-[84px] items-center justify-center rounded-full bg-[#929292] text-white">
            <PersonGlyph className="h-[41px] w-[37px]" />
          </span>
        </div>
      </div>
      <div className="absolute left-[20px] top-[816px] flex h-[36px] w-[248px] items-center rounded-[6px] bg-black/60 pl-[9px] text-white">
        <Fit className="w-[230px] text-[17px] leading-[26px]">Mohammed Mukthar (Guest)</Fit>
      </div>
    </main>
  );
}

/* ---------- chat ---------- */

type Msg = {
  name: string;
  time: string;
  text: string;
  busy: boolean;
  bubble: string;
  nameW: string;
  textW: string;
  wrap?: boolean;
};
const before: Msg[] = [
  { name: "Kiran Kumar GN", time: "09:02", text: "Good morning all,", busy: false, bubble: "w-[241px] h-[89px] mt-[32px]", nameW: "w-[132px]", textW: "w-[168px]" },
  { name: "SUBHASH CHANDRA, GANTA", time: "09:03", text: "good morning", busy: false, bubble: "w-[347px] h-[119px] mt-[24px]", nameW: "w-[242px]", textW: "w-[134px]", wrap: true },
  { name: "Managoli, Aquib", time: "09:03", text: "Good morning", busy: true, bubble: "w-[244px] h-[89px] mt-[24px]", nameW: "w-[135px]", textW: "w-[136px]" },
];
const after: Msg = {
  name: "V Jogi, Mahesh", time: "09:14", text: "good mornning", busy: true, bubble: "w-[232px] h-[89px] mt-[21px]", nameW: "w-[123px]", textW: "w-[146px]",
};

function Message({ m }: { m: Msg }) {
  return (
    <div className="flex items-end">
      <div className={`flex ${m.wrap ? "h-[119px]" : "h-[89px]"}`}>
        <span className="relative z-10 mt-[15px] flex h-[48px] w-[48px] items-center justify-center rounded-full bg-[#929292] text-white">
          <PersonGlyph className="h-[25px] w-[22px]" />
          <span className="absolute left-[30px] top-[30px] flex h-[21px] w-[21px] items-center justify-center rounded-full bg-[#1f1f1f]">
            {m.busy ? (
              <span className="h-[15px] w-[15px] rounded-full bg-[#c4314b]" />
            ) : (
              <Line box="0 0 15 15" w={1.500} className="h-[15px] w-[15px] text-[#959595]">
                <circle cx="7.500" cy="7.500" r="6.600" />
                <path d="M5.300 5.300l4.400 4.400M9.700 5.300L5.300 9.700" />
              </Line>
            )}
          </span>
        </span>
      </div>
      <div className={`-ml-[15px] rounded-[6px] bg-[#292929] pl-[24px] pt-[15px] ${m.bubble}`}>
        <div className={`flex text-[17px] leading-[30px] text-[#a6a6a6] ${m.wrap ? "flex-col" : ""}`}>
          <Fit className={`font-semibold text-[#d2d2d2] ${m.nameW}`}>{m.name}</Fit>
          <Fit className={`w-[43px] ${m.wrap ? "" : "ml-[18px]"}`}>{m.time}</Fit>
        </div>
        <Fit className={`text-[20px] leading-[31px] text-white ${m.textW}`}>{m.text}</Fit>
      </div>
    </div>
  );
}

function Chat() {
  return (
    <aside className="flex w-[477px] flex-col border-l border-[#111] bg-[#1f1f1f]">
      <div className="flex h-[90px] shrink-0 items-center justify-between border-b border-[#101010] pl-[30px] pr-[43px] text-white">
        <Fit className="mt-[5px] w-[153px] text-[26px] font-bold leading-[36px]">Meeting chat</Fit>
        <CloseX className="mt-[4px] text-[#d6d6d6]" />
      </div>
      <div className="flex h-[63px] shrink-0 items-center border-b border-[#696969] bg-[#3d3d3d] pl-[33px] text-[#d0d0d0]">
        <Line className="-mt-px h-[25px] w-[26px]" w={1.400}>
          <path d="M15.500 1.500l7 7c.5.500.4 1.200-.3 1.500l-5.500 2.800-2.500 7c-.3.700-1 .8-1.500.3L4 11.500c-.5-.5-.4-1.200.3-1.500l7-2.500L14 2c.3-.7 1-.9 1.500-.5zM8 15.500L1 23" />
        </Line>
        <Fit className="ml-[20px] mt-[2px] w-[159px] text-[17.500px] leading-[30px]">Koli, Smita Janardan</Fit>
        <Fit className="ml-[44px] mt-[2px] w-[94px] text-[17.500px] font-semibold leading-[30px]">25-02-2022</Fit>
        <Solid box="0 0 20 6" className="ml-[59px] h-[6px] w-[20px] text-[#e8e8e8]">
          <circle cx="2.500" cy="3" r="1.900" />
          <circle cx="10" cy="3" r="1.900" />
          <circle cx="17.500" cy="3" r="1.900" />
        </Solid>
      </div>
      <div className="h-[591px] shrink-0 overflow-hidden pl-[31px]">
        <div className="-mb-[8px] -mt-[17px] flex h-[30px] items-center pl-[12px] text-[17px] leading-[30px] text-[#adadad]">
          <Solid box="0 0 24 18" className="h-[17px] w-[24px] text-[#9299f7]">
            <rect width="16.500" height="18" rx="3.500" />
            <path d="M18 6.500L23 2.500c.5-.3 1 0 1 .6v12c0 .6-.5.9-1 .5l-5-4z" />
          </Solid>
          <Fit className="ml-[21px] mt-px w-[44px] font-medium">08:55</Fit>
          <Fit className="ml-[19px] mt-px w-[131px] font-semibold">Meeting started</Fit>
        </div>
        {before.map((m) => (
          <Message key={m.name} m={m} />
        ))}
        <div className="mt-[20px] flex h-[30px] items-center text-[#9299f7]">
          <span className="h-[2px] w-[131px] bg-current" />
          <Fit className="ml-[30px] mt-px w-[76px] text-[17px] font-bold leading-[30px]">Last read</Fit>
          <span className="ml-[30px] h-[2px] w-[131px] bg-current" />
        </div>
        <Message m={after} />
      </div>
      <div className="ml-[30px] flex h-[64px] w-[418px] shrink-0 items-center overflow-hidden rounded-[6px] border border-b-[3px] border-[#101010] border-b-[#9299f7] bg-[#292929] pl-[24px]">
        <span className="h-[28px] w-px bg-white" />
        <Fit className="mt-[3px] w-[190px] text-[20px] leading-[30px] text-[#989898]">Type a new message</Fit>
      </div>
      <div className="ml-[42px] mt-[14px] flex h-[24px] items-center text-[#cfcfcf]">
        <Line className="h-[24px] w-[24px]" w={1.400}>
          <path d="M.8 14L6 1l5 11M2.800 9.500h7M7 23l1.500-6L19 6.800c2.500-2 5.300.7 3.500 3.300L12.500 20.500zM8.500 17l4 3.500" />
        </Line>
        <Line className="ml-[25px] h-[24px] w-[24px]" w={1.400}>
          <path d="M3 12L12.500 3c4.500-3.700 10 2 6.500 6.300L9 20.500c-3 2.700-6.800-.8-4.300-4L14 7.500M5 22c2 .8 4 .3 5.500-1.200" />
        </Line>
        <Line className="ml-[23px] h-[24px] w-[24px]" w={1.400}>
          <path d="M2 22.300V12A10.300 10.300 0 1 1 12.300 22.300z" />
          <path d="M8.500 18v-6.500a4.300 4.300 0 1 1 4.300 4.300c-2.500 0-3.800 1-4.300 2.200z" />
        </Line>
        <Line className="ml-[24px] h-[24px] w-[24px]" w={1.400}>
          <circle cx="12" cy="12" r="11.200" />
          <path d="M7 15.500c2.500 3.300 7.500 3.300 10 0" />
          <path d="M8 9.500v.1M16 9.500v.1" strokeWidth="2.600" />
        </Line>
        <span className="ml-[24px] flex h-[21px] w-[24px] items-center justify-center rounded-[4px] border-[1.500px] border-[#cfcfcf]">
          <Fit className="w-[18px] text-[12px] font-semibold leading-[14px]">GIF</Fit>
        </span>
        <Line className="ml-[24px] h-[24px] w-[24px]" w={1.400}>
          <path d="M4 .8h16A3.200 3.200 0 0 1 23.200 4v11.500l-7.700 7.700H4A3.200 3.200 0 0 1 .8 20V4A3.200 3.200 0 0 1 4 .8zM23 15h-5a3 3 0 0 0-3 3v5M7 13.500c1.500 2.500 4.500 3.500 7.500 2.500" />
          <path d="M7.500 8.500v.1M16 8.500v.1" strokeWidth="2.600" />
        </Line>
        <Solid box="0 0 20 6" className="ml-[26px] h-[6px] w-[20px]">
          <circle cx="2.200" cy="3" r="1.700" />
          <circle cx="10" cy="3" r="1.700" />
          <circle cx="17.800" cy="3" r="1.700" />
        </Solid>
        <Line className="ml-[60px] h-[24px] w-[24px]" w={1.400}>
          <path d="M.8.8L23.300 12 .8 23.200 4.500 12zM4.500 12h8" />
        </Line>
      </div>
    </aside>
  );
}

/* ---------- desktop taskbar ---------- */

function AppSlot({ children, open = false }: { children: React.ReactNode; open?: boolean }) {
  return (
    <div className="flex h-full w-[75px] shrink-0 flex-col items-center justify-end">
      <div className="flex grow items-center justify-center pr-[2px]">{children}</div>
      {open && <span className="h-[3px] w-[61px] bg-[#76b9ed]" />}
    </div>
  );
}

function Taskbar() {
  return (
    <footer className="flex h-[60px] items-center bg-[#1c1c1c] text-white">
      <div className="flex w-[72px] justify-center">
        <WinLogo className="h-[24px] w-[24px]" />
      </div>
      <div className="flex h-[60px] w-[516px] items-center border-2 border-[#bdbdbd] bg-[#f2f2f2] pl-[16px] text-[#2b2b2b]">
        <Glass className="h-[24px] w-[24px] text-black" />
        <Fit className="ml-[18px] mt-[3px] w-[198px] text-[21.500px] leading-[30px]">Type here to search</Fit>
      </div>
      <div className="flex w-[76px] justify-center pr-[5px]">
        <TaskView className="h-[24px] w-[25px]" />
      </div>
      <AppSlot open>
        <Explorer className="ml-px mt-[2px] h-[28px] w-[33px]" />
      </AppSlot>
      <AppSlot>
        <Chrome className="h-[33px] w-[33px]" />
      </AppSlot>
      <AppSlot open>
        <Cmd className="mt-[2px] h-[28px] w-[34px]" />
      </AppSlot>
      <div className="flex h-full w-[75px] flex-col px-px">
        <div className="flex grow bg-[#4b4b4b]">
          <div className="flex w-[67px] items-center justify-center border-r-2 border-[#333]">
            <svg viewBox="0 0 36 35" className="ml-[6px] mt-[4px] h-[35px] w-[36px]">
              <circle cx="29.500" cy="8" r="4" fill="#5059c9" />
              <path d="M23 14h10a2 2 0 0 1 2 2v9a6.500 6.500 0 0 1-12 3z" fill="#5059c9" />
              <circle cx="18.500" cy="6" r="5.600" fill="#7b83eb" />
              <path d="M11 14h15a2 2 0 0 1 2 2v9a9 9 0 0 1-17 4z" fill="#7b83eb" />
              <rect x="0" y="8.500" width="18.500" height="18" rx="1.500" fill="#4b53bc" />
              <text x="9.200" y="22.500" textAnchor="middle" fontSize="14" fontWeight="700" fill="#fff" className="font-['Open_Sans']">T</text>
              <circle cx="29" cy="27.500" r="7.200" fill="#c50f2f" stroke="#f1e9eb" strokeWidth="1" />
            </svg>
          </div>
        </div>
        <span className="h-[3px] w-full bg-[#76b9ed]" />
      </div>
      <AppSlot open>
        <svg viewBox="0 0 35 32" className="mt-px h-[32px] w-[35px]">
          <path d="M10 0h23a1.500 1.500 0 0 1 1.500 1.500V16H10z" fill="#1066b5" />
          <path d="M18 5h8v7h-8z" fill="#2fb0f2" />
          <path d="M26 5h8.500v7H26z" fill="#56d2fb" />
          <path d="M26 0h8.500v5H26z" fill="#28a5ea" />
          <path d="M18 12h8v6h-8z" fill="#1280d0" />
          <path d="M8 16l13 9 14-9v14a2 2 0 0 1-2 2H10a2 2 0 0 1-2-2z" fill="#1d8fe0" />
          <path d="M21 25l14-8v13a2 2 0 0 1-2 2H14z" fill="#3aaef4" />
          <rect x="0" y="7" width="18" height="18" rx="1.500" fill="#0d6cc4" />
          <circle cx="9" cy="16" r="4" fill="none" stroke="#fff" strokeWidth="2.400" />
        </svg>
      </AppSlot>
      <AppSlot open>
        <Notepad className="mt-px h-[32px] w-[33px]" />
      </AppSlot>
      <AppSlot open>
        <svg viewBox="0 0 34 34" className="mt-px h-[34px] w-[34px]">
          <defs>
            <linearGradient id="npp" x1="0" y1="0" x2="0" y2="1">
              <stop offset="0.300" stopColor="#f6fbf0" />
              <stop offset="0.550" stopColor="#8ce63a" />
              <stop offset="0.950" stopColor="#d8f5c0" />
            </linearGradient>
          </defs>
          <path d="M2 3h25l-4 29.500L1 33z" fill="url(#npp)" />
          <path d="M3 4h23" stroke="#999" strokeWidth="2.500" strokeDasharray="1.500 1.200" />
          <ellipse cx="12" cy="18" rx="6" ry="5" fill="#9be43c" stroke="#1f3d0c" strokeWidth="1.300" />
          <circle cx="14.500" cy="11.500" r="2.200" fill="#fff" stroke="#222" />
          <circle cx="17.500" cy="14.500" r="2" fill="#fff" stroke="#222" />
          <path d="M5 19l11 .5M9 23l4-7M15 25l2 3h4" fill="none" stroke="#1f3d0c" strokeWidth="1.300" />
          <path d="M32.500 .5l1.500 1L26.500 22l-3 4 .5-5z" fill="#f0a526" stroke="#8b5a10" strokeWidth=".6" />
        </svg>
      </AppSlot>
      <Weather className="ml-[233px] h-[30px] w-[30px]" />
      <Fit className="ml-[15px] mt-[4px] w-[44px] text-[20px] leading-[30px]">26°C</Fit>
      <Line box="0 0 18 10" w={1.500} className="ml-[26px] h-[10px] w-[18px]">
        <path d="M.8 9.300L9 1l8.200 8.300" />
      </Line>
      <Mic className="ml-[19px] h-[24px] w-[15px]" />
      <Line box="0 0 24 18" w={1.400} className="ml-[16px] h-[18px] w-[24px]">
        <path d="M9.500 4.700h12.800v10.600H5M22.500 8h1.200v4h-1.200M1 4.500h6.500V7c0 4-6.500 4-6.500 0zM2.500 1v3M6 1v3M4.300 10v7.500" />
        <path d="M9 6.500h11.500v7H6.500c0-2 2.500-2.500 2.500-7z" fill="currentColor" stroke="none" />
      </Line>
      <Line box="0 0 19 18" w={1.300} className="ml-[16px] h-[19px] w-[19px]">
        <path d="M.7 17.500C1 8 8 1 18.500.7M5 17.500C5.300 10.500 10.500 5.300 18.500 5M9.500 17.500c.3-4.700 3.800-8 9-8.300" stroke="#bdbdbd" />
        <path d="M13.500 17c.3-2 2-3.500 4-3.800" />
        <circle cx="17.500" cy="16.500" r="1.200" fill="currentColor" />
      </Line>
      <div className="ml-[17px] mt-[2px] flex w-[35px] flex-col items-center text-[17px] leading-[27px]">
        <Fit className="w-[34px]">ENG</Fit>
        <Fit className="w-[22px]">US</Fit>
      </div>
      <div className="ml-[19px] flex w-[94px] flex-col items-center text-[17px] leading-[28px]">
        <Fit className="w-[44px]">09:22</Fit>
        <Fit className="w-[94px]">21-03-2022</Fit>
      </div>
      <Line w={1.400} className="ml-[29px] h-[24px] w-[24px]">
        <path d="M.8.8h22.400v18H16l-4 4.200-4-4.200H.8z" strokeLinejoin="miter" />
      </Line>
      <span className="ml-[30px] h-[60px] w-[2px] bg-[#6d6d6d]" />
    </footer>
  );
}

export default function App() {
  return (
    <div className="h-[1080px] w-[1920px] overflow-hidden bg-[#1b1b1b] font-['Open_Sans','Noto_Sans',sans-serif]">
      <TitleBar />
      <MeetingBar />
      <div className="flex h-[871px]">
        <Stage />
        <Chat />
      </div>
      <Taskbar />
    </div>
  );
}
